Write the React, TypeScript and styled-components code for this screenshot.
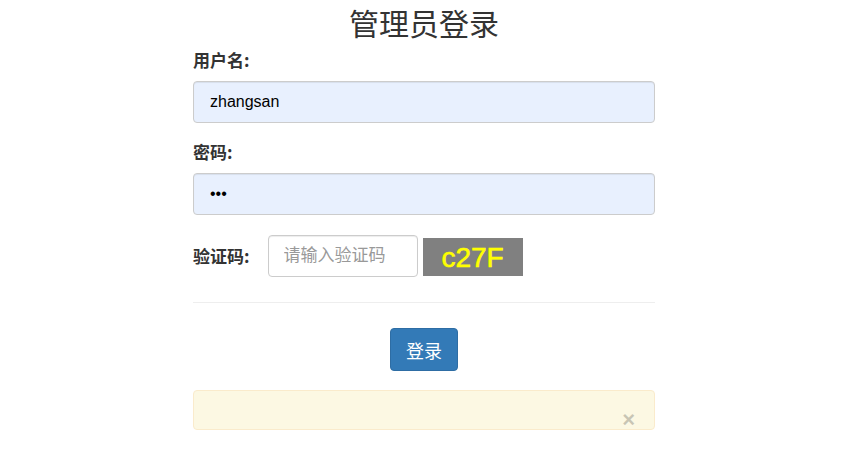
import React from "react";
import styled, { createGlobalStyle } from "styled-components";

const Global = createGlobalStyle`
  html, body { margin: 0; padding: 0; background: #fff; }
  body {
    font-family: "Liberation Sans", "Noto Sans CJK SC", sans-serif;
    color: #333;
    font-size: 16px;
    overflow-y: scroll;
  }
  * { box-sizing: border-box; }
`;

const Page = styled.div`
  display: flex;
  justify-content: center;
  padding-right: 16px;
`;

const Form = styled.form`
  width: 462px;
  display: flex;
  flex-direction: column;
`;

const Title = styled.h2`
  margin: 0;
  font-family: "Noto Sans CJK SC", sans-serif;
  font-weight: 400;
  font-size: 30px;
  line-height: 44px;
  text-align: center;
  color: #333;
`;

const Group = styled.div<{ $mt: number }>`
  display: flex;
  flex-direction: column;
  margin-top: ${(p) => p.$mt}px;
`;

const Label = styled.label`
  font-family: "Noto Sans CJK SC", sans-serif;
  font-weight: 700;
  font-size: 17px;
  line-height: 22px;
  color: #333;
  white-space: nowrap;
`;

const Input = styled.input<{ $filled?: boolean }>`
  margin-top: 10px;
  height: 42px;
  width: 100%;
  padding: 0 16px;
  font-family: "Liberation Sans", "Noto Sans CJK SC", sans-serif;
  font-size: 16px;
  color: #000;
  background: ${(p) => (p.$filled ? "#e8f0fe" : "#fff")};
  border: 1px solid #ccc;
  border-radius: 4px;
  outline: none;
  box-shadow: inset 0 1px 1px rgba(0, 0, 0, 0.075);
  &::placeholder { color: #999; font-family: "Noto Sans CJK SC", sans-serif; }
`;

const CodeRow = styled.div`
  display: flex;
  align-items: center;
  margin-top: 20px;
  height: 42px;
`;

const CodeInput = styled(Input)`
  margin: 0 0 0 18px;
  width: 150px;
  height: 42px;
  padding: 0 15px;
  font-size: 17px;
`;

const Captcha = styled.div`
  margin-left: 5px;
  margin-top: 1px;
  width: 100px;
  height: 38px;
  background: #808080;
  color: #ffff00;
  font-family: "Liberation Sans", sans-serif;
  font-weight: 400;
  font-size: 28px;
  -webkit-text-stroke: 0.6px #ffff00;
  display: flex;
  align-items: center;
  justify-content: center;
  padding-top: 3px;
`;

const Rule = styled.hr`
  margin: 25px 0 0;
  border: 0;
  border-top: 1px solid #eee;
`;

const Actions = styled.div`
  display: flex;
  justify-content: center;
  margin-top: 25px;
`;

const Button = styled.button`
  width: 68px;
  height: 43px;
  background: #337ab7;
  border: 1px solid #2e6da4;
  border-radius: 4px;
  color: #fff;
  font-family: "Noto Sans CJK SC", sans-serif;
  font-size: 18px;
  padding: 0;
`;

const Alert = styled.div`
  margin-top: 19px;
  height: 40px;
  background: #fcf8e3;
  border: 1px solid #faebcc;
  border-radius: 4px;
  position: relative;
`;

const Close = styled.span`
  position: absolute;
  right: 19px;
  top: 21px;
  font-family: "Liberation Sans", sans-serif;
  font-weight: 700;
  font-size: 22px;
  line-height: 16px;
  color: #000;
  opacity: 0.2;
  text-shadow: 0 1px 0 #fff;
`;

export default function App() {
  return (
    <>
      <Global />
      <Page>
        <Form onSubmit={(e) => e.preventDefault()}>
          <Title>管理员登录</Title>
          <Group $mt={5}>
            <Label>用户名:</Label>
            <Input $filled defaultValue="zhangsan" />
          </Group>
          <Group $mt={18}>
            <Label>密码:</Label>
            <Input $filled type="password" defaultValue="123" />
          </Group>
          <CodeRow>
            <Label>验证码:</Label>
            <CodeInput placeholder="请输入验证码" />
            <Captcha>c27F</Captcha>
          </CodeRow>
          <Rule />
          <Actions>
            <Button type="submit">登录</Button>
          </Actions>
          <Alert>
            <Close>×</Close>
          </Alert>
        </Form>
      </Page>
    </>
  );
}
